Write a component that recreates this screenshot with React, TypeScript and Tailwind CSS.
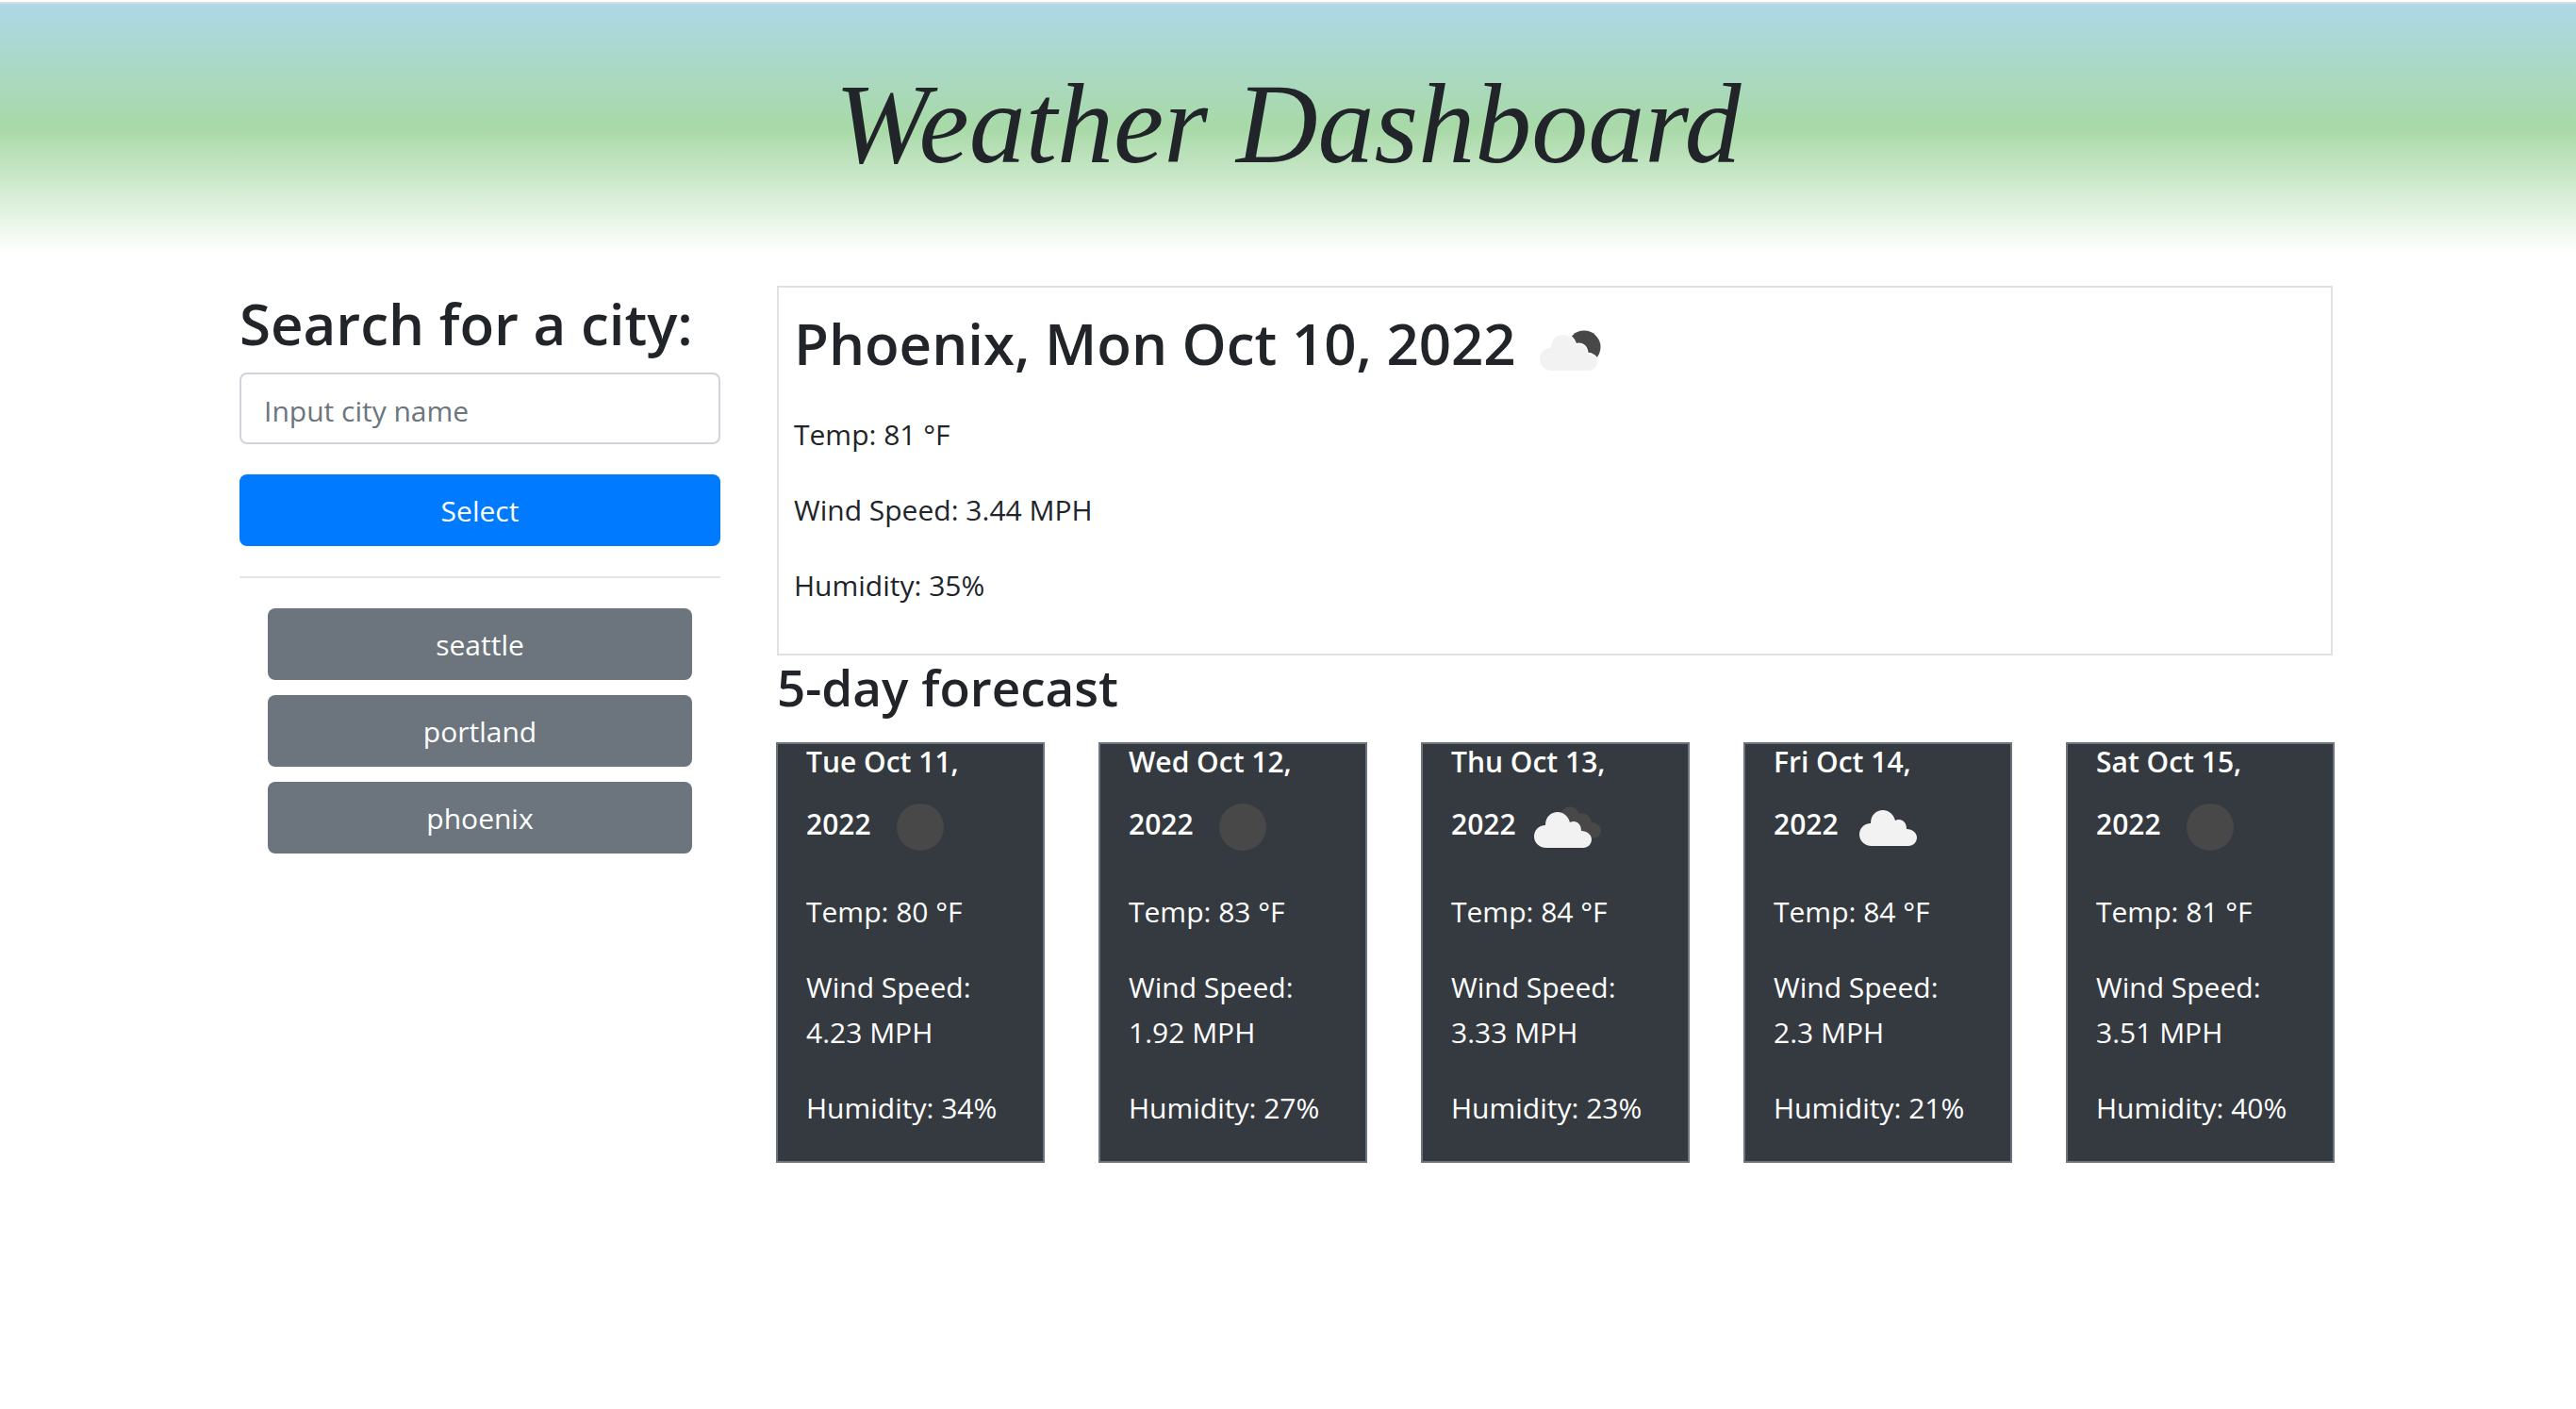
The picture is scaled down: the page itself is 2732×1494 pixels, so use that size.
import type { ReactNode } from "react";

type IconKind = "clear" | "few" | "scattered" | "broken";

const CLOUD =
  "M30 72 C22 72 17 66 17 60 C17 53 22 48 29 48 C29 39 35 34 42 34 C48 34 53 38 55 45 C61 42 67 46 67 54 C73 54 78 58 78 63 C78 68 74 72 69 72 Z";

function WeatherIcon({ kind }: { kind: IconKind }) {
  return (
    <svg viewBox="0 0 100 100" className="inline-block h-[100px] w-[100px] align-middle" aria-hidden="true">
      {kind === "clear" && <circle cx="50" cy="50" r="25" fill="#484848" />}
      {kind === "few" && (
        <>
          <circle cx="64" cy="47" r="17.5" fill="#484848" />
          <path d={CLOUD} fill="#f2f2f2" stroke="#ffffff" strokeWidth="3" paintOrder="stroke" />
        </>
      )}
      {kind === "broken" && (
        <>
          <path d="M46 34 C50 27 60 26 65 36 C72 34 77 38 78 45 C84 45 88 49 88 54 C88 58 85 61 81 62 L60 58 Z" fill="#484848" />
          <path d={CLOUD} fill="#f2f2f2" />
        </>
      )}
      {kind === "scattered" && <path d={CLOUD} fill="#f2f2f2" transform="translate(3 -2)" />}
    </svg>
  );
}

const history = ["seattle", "portland", "phoenix"];

const forecast: { day: string; icon: IconKind; temp: string; wind: string; humidity: string }[] = [
  { day: "Tue Oct 11,", icon: "clear", temp: "80", wind: "4.23", humidity: "34" },
  { day: "Wed Oct 12,", icon: "clear", temp: "83", wind: "1.92", humidity: "27" },
  { day: "Thu Oct 13,", icon: "broken", temp: "84", wind: "3.33", humidity: "23" },
  { day: "Fri Oct 14,", icon: "scattered", temp: "84", wind: "2.3", humidity: "21" },
  { day: "Sat Oct 15,", icon: "clear", temp: "81", wind: "3.51", humidity: "40" },
];

function Reading({ children }: { children: ReactNode }) {
  return <p className="mb-8">{children}</p>;
}

export default function App() {
  return (
    <div className="min-h-screen bg-white pt-0.5 font-['Open_Sans','Noto_Sans',sans-serif] text-[30px] leading-[48px] text-[#212529]">
      <header className="border-t-2 border-[#dcdcdc] bg-[linear-gradient(#add8e6,#a8d9a7,#ffffff)] pt-14 pb-16 text-center">
        <h1 className="font-['Liberation_Serif',serif] text-[120px] leading-[144px] italic">Weather Dashboard</h1>
      </header>

      <div className="pt-[35px] pr-1">
        <div className="mx-auto grid max-w-[2280px] grid-cols-4">
          <aside className="px-[30px]">
            <form onSubmit={(e) => e.preventDefault()}>
              <h2 className="mb-3 text-[60px] leading-[80px] font-semibold">
                <label htmlFor="city">Search for a city:</label>
              </h2>
              <input
                id="city"
                type="text"
                placeholder="Input city name"
                className="block h-[76px] w-full rounded-lg border-2 border-[#ced4da] px-6 pt-1 placeholder:text-[#6c757d]"
              />
              <button type="submit" className="mt-8 h-[76px] w-full rounded-lg bg-[#007bff] pt-0.5 text-white">
                Select
              </button>
            </form>
            <hr className="my-8 border-t-2 border-[#e5e5e5]" />
            <div className="flex flex-col gap-4 px-[30px]">
              {history.map((city) => (
                <button key={city} type="button" className="h-[76px] rounded-lg bg-[#6c757d] pt-0.5 text-white">
                  {city}
                </button>
              ))}
            </div>
          </aside>

          <main className="col-span-3 px-[30px]">
            <section className="border-2 border-[#dee2e6] px-4 pt-4 pb-4">
              <h2 className="mb-4 text-[60px] leading-[77px] font-semibold">
                <span className="mr-2">Phoenix, Mon Oct 10, 2022</span>
                <WeatherIcon kind="few" />
              </h2>
              <Reading>Temp: 81 °F</Reading>
              <Reading>Wind Speed: 3.44 MPH</Reading>
              <Reading>Humidity: 35%</Reading>
            </section>

            <h3 className="mb-6 text-[53px] leading-[68px] font-semibold">5-day forecast</h3>
            <div className="-mr-0.5 -ml-px grid grid-cols-5 gap-[57px]">
              {forecast.map((f) => (
                <article key={f.day} className="border-2 border-[#6c757d] bg-[#343a40] px-[30px] text-white">
                  <h4 className="mb-4 leading-[38px] font-semibold">
                    {f.day}{" "}
                    <span className="whitespace-nowrap">
                      <span className="mr-0.5">2022</span>
                      <WeatherIcon kind={f.icon} />
                    </span>
                  </h4>
                  <Reading>Temp: {f.temp} °F</Reading>
                  <Reading>Wind Speed: {f.wind} MPH</Reading>
                  <Reading>Humidity: {f.humidity}%</Reading>
                </article>
              ))}
            </div>
          </main>
        </div>
      </div>
    </div>
  );
}
